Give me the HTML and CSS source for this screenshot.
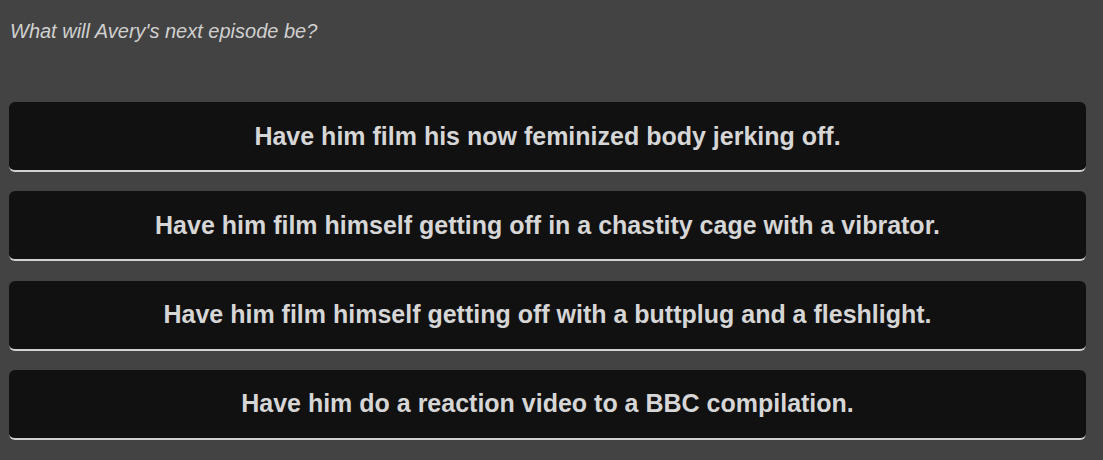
FILE: index.html
```html
<!DOCTYPE html>
<html>
<head>
<meta charset="utf-8">
<link rel="stylesheet" href="styles.css">
</head>
<body>
<div class="page">
  <p class="prompt">What will Avery's next episode be?</p>
  <div class="choices">
    <button class="choice">Have him film his now feminized body jerking off.</button>
    <button class="choice">Have him film himself getting off in a chastity cage with a vibrator.</button>
    <button class="choice">Have him film himself getting off with a buttplug and a fleshlight.</button>
    <button class="choice">Have him do a reaction video to a BBC compilation.</button>
  </div>
</div>
</body>
</html>
```
FILE: styles.css
```css
html, body {
  margin: 0;
  padding: 0;
  background: #434343;
  height: 100%;
  overflow: hidden;
}
.page {
  padding: 19px 17px 0 9px;
  font-family: "Liberation Sans", Arial, sans-serif;
}
.prompt {
  margin: 0 0 0 1px;
  font-style: italic;
  font-size: 20px;
  line-height: 24px;
  color: #d0d0d0;
}
.choices {
  margin-top: 59px;
  display: flex;
  flex-direction: column;
  gap: 19.33px;
}
.choice {
  display: block;
  width: 100%;
  height: 70px;
  background: #111111;
  color: #d6d6d6;
  border: none;
  border-bottom: 2px solid #d2d2d2;
  border-radius: 6px;
  font-family: "Liberation Sans", Arial, sans-serif;
  font-weight: bold;
  font-size: 25px;
  text-align: center;
  padding: 0 10px;
  cursor: pointer;
}
```
